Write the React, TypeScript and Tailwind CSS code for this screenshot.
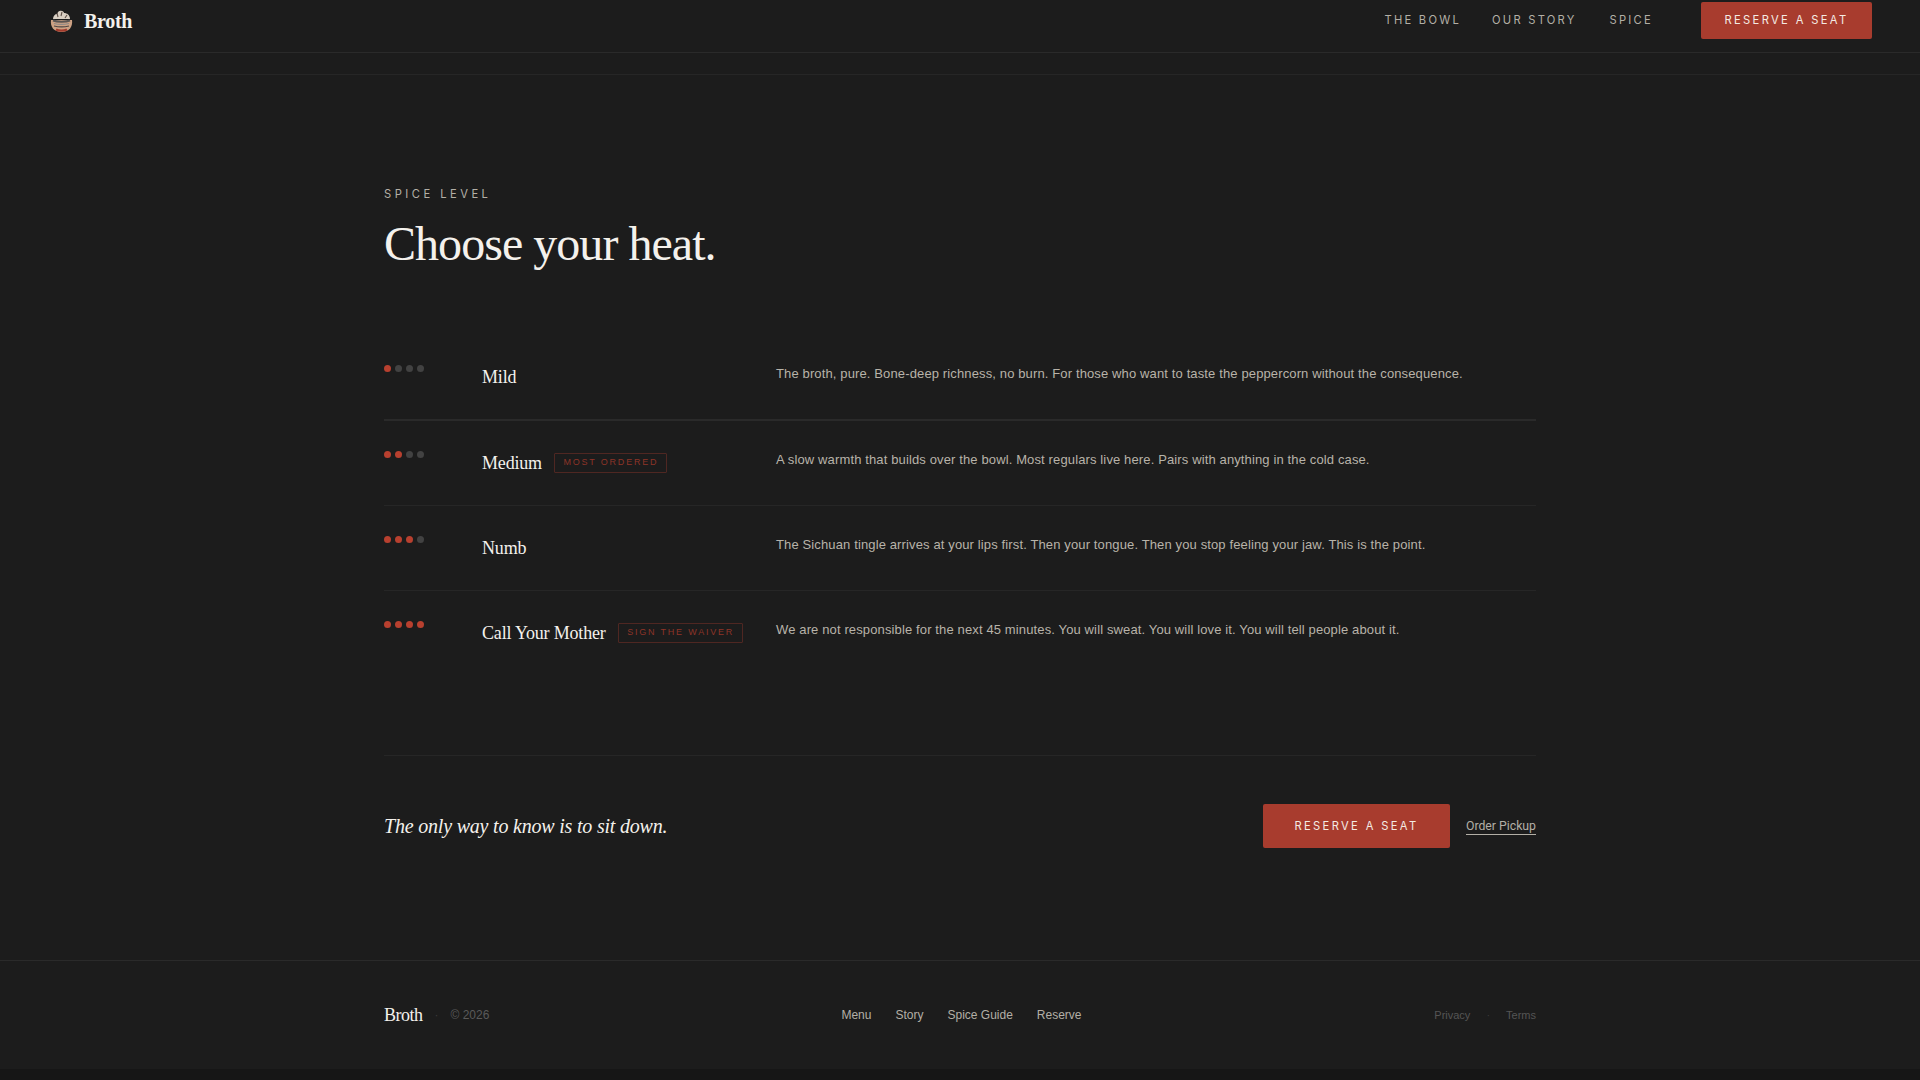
const sans = "font-['Liberation_Sans',Arial,sans-serif]";
const serif = "font-['Liberation_Serif','Times_New_Roman',serif]";
const inter = "font-['Inter',sans-serif]";

const levels = [
  {
    heat: 1,
    name: "Mild",
    desc: "The broth, pure. Bone-deep richness, no burn. For those who want to taste the peppercorn without the consequence.",
  },
  {
    heat: 2,
    name: "Medium",
    badge: "MOST ORDERED",
    desc: "A slow warmth that builds over the bowl. Most regulars live here. Pairs with anything in the cold case.",
  },
  {
    heat: 3,
    name: "Numb",
    desc: "The Sichuan tingle arrives at your lips first. Then your tongue. Then you stop feeling your jaw. This is the point.",
  },
  {
    heat: 4,
    name: "Call Your Mother",
    badge: "SIGN THE WAIVER",
    desc: "We are not responsible for the next 45 minutes. You will sweat. You will love it. You will tell people about it.",
  },
];

function BowlLogo() {
  return (
    <svg width="23" height="23" viewBox="0 0 23 23" className="shrink-0">
      <path d="M3 9c0-3 2-5 4-5 1-3 3-4 5-3 1 0 2 1 2 2 3 0 6 2 6 6z" fill="#d9cfc3" />
      <path d="M7 3l1 4M12 2l-1 4M17 5l-2 3" stroke="#5d4f47" strokeWidth="1.1" />
      <path d="M1 10h21c1 7-3 12-10.500 12S0 17 1 10z" fill="#cda183" />
      <path d="M3 10.500c4 1.500 13 1.500 17 0" stroke="#5a5553" strokeWidth="2" fill="none" />
      <path d="M4 13.500c4 1 11 1 15 0" stroke="#8f8a87" strokeWidth="1.2" fill="none" />
      <path d="M4 16c4 1 11 1 15 0" stroke="#4d4745" strokeWidth="1.2" fill="none" />
      <path d="M6 19.500c3 1.600 8 1.600 11 0" stroke="#a23a2c" strokeWidth="2.200" fill="none" />
    </svg>
  );
}

function Dots({ heat }: { heat: number }) {
  return (
    <div className="flex gap-[4px] pt-[2px]">
      {[1, 2, 3, 4].map((i) => (
        <span
          key={i}
          className={
            i <= heat
              ? "w-[7px] h-[7px] rounded-full bg-[#b8402f]"
              : "w-[7px] h-[7px] rounded-full bg-[#424242]"
          }
        />
      ))}
    </div>
  );
}

export default function App() {
  return (
    <div className={`h-[1080px] overflow-hidden bg-[#161616] ${sans}`}>
      <div className="h-[1069px] bg-[#1c1c1c]">
        {/* Nav */}
        <header className="h-[53px] border-b border-[#2a2a2a] pl-[50px] pr-[48px] flex items-start justify-between">
          <div className="flex items-center gap-[11px] h-[42px]">
            <BowlLogo />
            <span className={`${serif} text-[20px] font-bold text-[#f4f1ec] tracking-[-0.3px]`}>Broth</span>
          </div>
          <nav className={`${inter} flex items-center text-[11.2px] text-[#b3afa6] pt-[2px]`}>
            <a className="mr-[31px] tracking-[0.2em]">THE BOWL</a>
            <a className="mr-[33px] tracking-[0.2em]">OUR STORY</a>
            <a className="mr-[48px] tracking-[0.2em]">SPICE</a>
            <a className="w-[171px] h-[37px] flex items-center justify-center rounded-[2px] bg-[#a83c2e] tracking-[0.21em] text-[#f4ebe4]">
              RESERVE A SEAT
            </a>
          </nav>
        </header>
        <div className="h-[22px] border-b border-[#262626]" />

        <main className="w-[1152px] mx-auto">
          {/* Heading */}
          <p className={`${inter} mt-[113px] text-[11.2px] leading-[12px] tracking-[0.31em] text-[#b3afa6]`}>
            SPICE LEVEL
          </p>
          <h1 className={`${serif} mt-[16px] text-[48px] leading-[56px] tracking-[-0.96px] text-[#f4f1ec]`}>
            Choose your heat.
          </h1>

          {/* Levels */}
          <div className="mt-[63px]">
            {levels.map((l, idx) => (
              <div
                key={l.name}
                className={
                  idx === 0
                    ? "grid grid-cols-[98px_294px_1fr] h-[86px] pt-[28px] border-b-2 border-[#2a2a2a]"
                    : idx === 3
                      ? "grid grid-cols-[98px_294px_1fr] h-[85px] pt-[28px]"
                      : "grid grid-cols-[98px_294px_1fr] h-[85px] pt-[28px] border-b border-[#262626]"
                }
              >
                <Dots heat={l.heat} />
                <div className="flex items-center gap-[12px] h-[28px]">
                  <span className={`${serif} text-[18px] text-[#f4f1ec] tracking-[-0.18px] whitespace-nowrap`}>
                    {l.name}
                  </span>
                  {l.badge && (
                    <span className="h-[20px] flex items-center border border-[#4f2722] rounded-[1px] pl-[8.5px] pr-[7.5px] text-[9px] tracking-[0.2em] text-[#8e3428] whitespace-nowrap">
                      {l.badge}
                    </span>
                  )}
                </div>
                <p className="mt-[1px] text-[13px] leading-[20px] tracking-[0.13px] text-[#b8b3a9]">{l.desc}</p>
              </div>
            ))}
          </div>

          {/* CTA */}
          <div className="mt-[79px] border-t border-[#262626] pt-[48px] flex items-center justify-between">
            <p className={`${serif} italic text-[20px] text-[#f4f1ec] tracking-[-0.2px]`}>
              The only way to know is to sit down.
            </p>
            <div className="flex items-center gap-[16px]">
              <a className={`${inter} w-[187px] h-[44px] flex items-center justify-center rounded-[2px] bg-[#a83c2e] text-[11.2px] tracking-[0.21em] text-[#f4ebe4]`}>
                RESERVE A SEAT
              </a>
              <a className="font-['Roboto',sans-serif] text-[12.25px] leading-[16px] text-[#b3afa6] border-b border-[#b3afa6]">
                Order Pickup
              </a>
            </div>
          </div>
        </main>

        {/* Footer */}
        <footer className="mt-[112px] border-t border-[#2a2a2a]">
          <div className="w-[1152px] mx-auto h-[108px] grid grid-cols-[1fr_auto_1fr] items-center">
            <div className="flex items-center">
              <span className={`${serif} text-[18px] text-[#f4f1ec] tracking-[-0.5px]`}>Broth</span>
              <span className="ml-[12px] text-[12px] text-[#3a3a3a]">·</span>
              <span className="ml-[12px] text-[12px] text-[#5a5a5a]">© 2026</span>
            </div>
            <div className="flex gap-[24px] pl-[3px] text-[12px] text-[#b3afa6]">
              <a>Menu</a>
              <a>Story</a>
              <a>Spice Guide</a>
              <a>Reserve</a>
            </div>
            <div className="flex justify-end items-center gap-[16px] text-[11px] text-[#555555]">
              <a>Privacy</a>
              <span className="text-[#3a3a3a]">·</span>
              <a>Terms</a>
            </div>
          </div>
        </footer>
      </div>
    </div>
  );
}
